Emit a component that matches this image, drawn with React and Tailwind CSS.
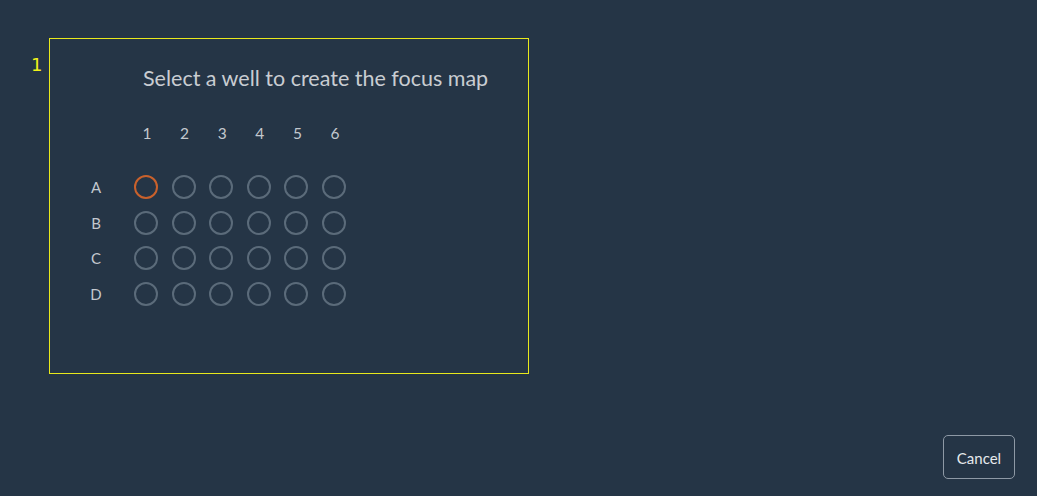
import React, { useState } from "react";

const ROWS = ["A", "B", "C", "D"];
const COLS = [1, 2, 3, 4, 5, 6];

export default function App() {
  const [selected, setSelected] = useState("A1");

  return (
    <div
      className="h-screen w-full bg-[#253546] flex flex-col overflow-hidden"
      style={{ fontFamily: "Lato, 'Noto Sans', sans-serif" }}
    >
      <div className="flex pt-[38px] pl-[31px]">
        <div className="w-[18px] pt-[16px] text-[18px] leading-[22px] text-[#f2f21a] font-['DejaVu_Sans',sans-serif]">
          1
        </div>
        <div className="w-[480px] h-[336px] border border-[#e8e81c] flex flex-col">
          <div className="pl-[93px] pt-[25px] text-[21.5px] leading-[28px] text-[#c9cdd2]">
            Select a well to create the focus map
          </div>

          <div className="flex pl-[30px] pt-[31px]">
            <div className="w-[54px]" />
            <div className="flex gap-x-[13.6px]">
              {COLS.map((c) => (
                <div
                  key={c}
                  className="w-[24px] text-center text-[15.5px] leading-[20px] text-[#c3c8ce] pl-[2px]"
                >
                  {c}
                </div>
              ))}
            </div>
          </div>

          <div className="flex flex-col gap-y-[11.7px] pl-[30px] pt-[32px]">
            {ROWS.map((r) => (
              <div key={r} className="flex items-center">
                <div className="w-[32px] text-center text-[15px] leading-[24px] text-[#c3c8ce]">
                  {r}
                </div>
                <div className="w-[22px]" />
                <div className="flex gap-x-[13.6px]">
                  {COLS.map((c) => {
                    const id = r + c;
                    return (
                      <button
                        key={id}
                        onClick={() => setSelected(id)}
                        className={
                          selected === id
                            ? "w-[24px] h-[24px] rounded-full border-2 border-[#c9612c]"
                            : "w-[24px] h-[24px] rounded-full border-2 border-[#5b6b7a]"
                        }
                      />
                    );
                  })}
                </div>
              </div>
            ))}
          </div>
        </div>
      </div>

      <div className="mt-auto flex justify-end pr-[22px] pb-[17px]">
        <button className="w-[72px] h-[44px] rounded-[5px] border border-[#8e99a5] text-[15px] text-[#e6e9ec] pt-[2px]">
          Cancel
        </button>
      </div>
    </div>
  );
}
